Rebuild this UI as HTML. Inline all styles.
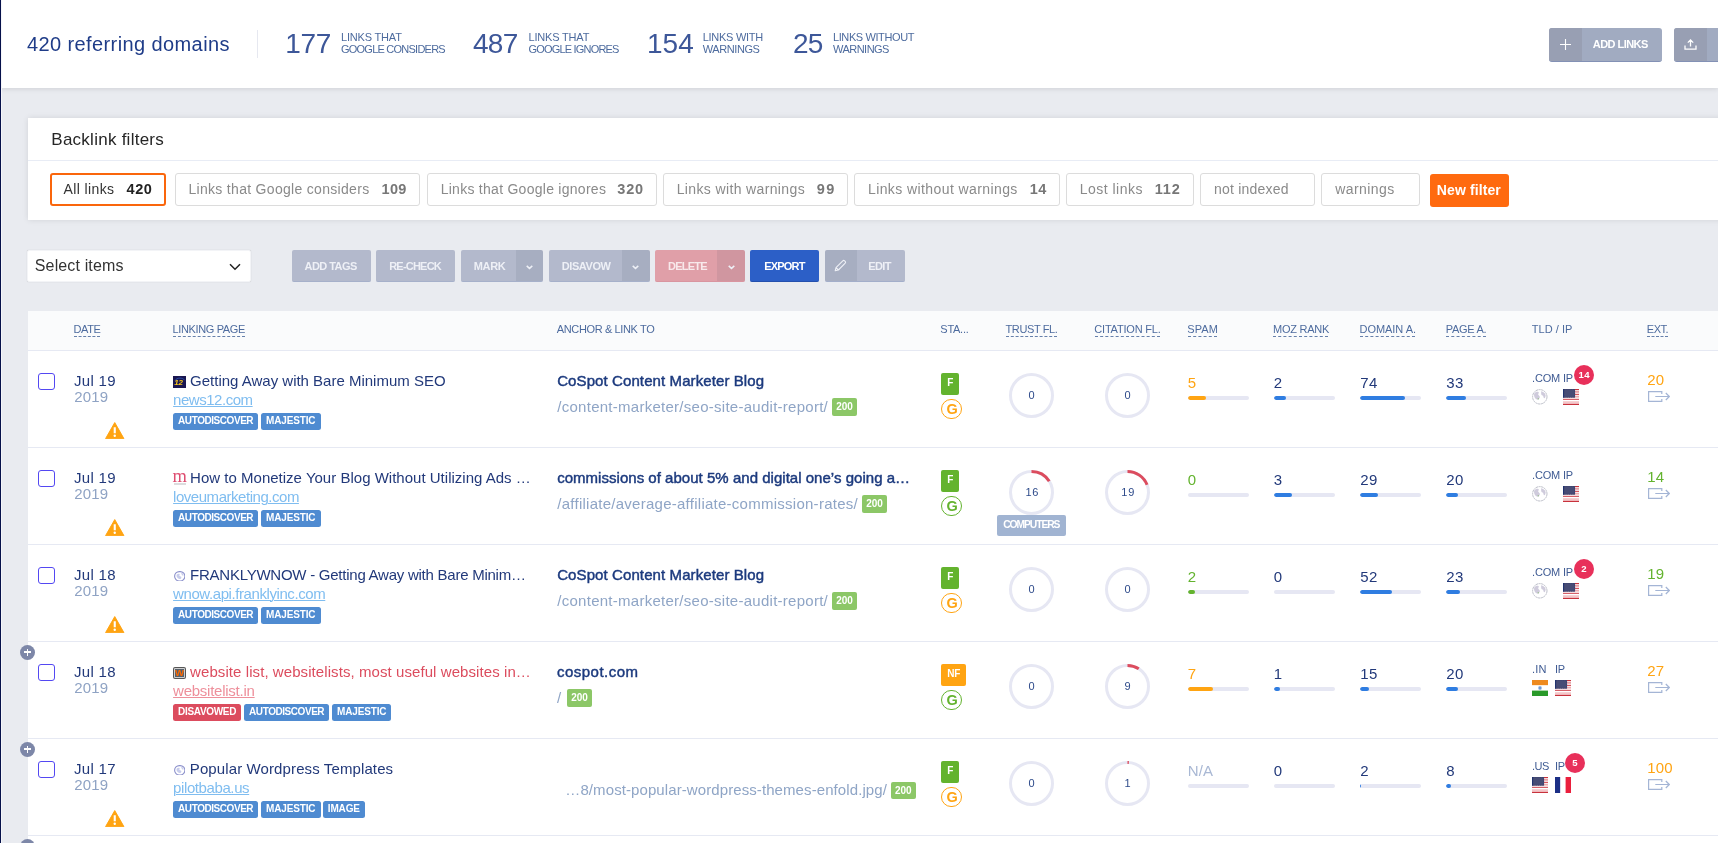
<!DOCTYPE html>
<html lang="en"><head><meta charset="utf-8"><title>Backlinks</title>
<style>
*{box-sizing:border-box;margin:0;padding:0}
html,body{width:1718px;height:843px;overflow:hidden}
body{background:#e9ebf0;font-family:"Liberation Sans",sans-serif;position:relative}
.t,.t2{position:absolute;white-space:nowrap;line-height:1;display:block}
.u{text-decoration:underline;text-decoration-thickness:1px;text-underline-offset:1px}
.abs{position:absolute}
header{position:absolute;left:0;top:0;width:1718px;height:88px;background:#fff;box-shadow:0 1px 5px rgba(0,0,0,.11)}
#app{position:absolute;left:0;top:0;width:1718px;height:843px;will-change:transform}
#strip{position:absolute;left:0;top:0;width:1px;height:843px;background:#06114a;box-shadow:1px 0 0 #f6f6fa;z-index:9}
.card{position:absolute;background:#fff}
.fbtn{position:absolute;top:55px;height:33px;border:1px solid #dcdcdc;border-radius:3px;background:#fff}
.btn{position:absolute;top:0;height:32.4px;border-radius:2px;background:#b3b9cc;border-bottom:1.5px solid #a3aeca;overflow:hidden}
.btn i{position:absolute;top:0;bottom:0;background:rgba(70,75,100,.1)}
.row{position:absolute;left:0;width:1690px;height:97px;background:#fff}
.row:before{content:"";position:absolute;left:0;right:0;top:0;height:1px;background:#e6e9f3}
.cb{position:absolute;left:10px;top:22.5px;width:17px;height:17px;border:1px solid #5348f2;border-radius:3px;background:#fff}
.tag{position:absolute;height:17px;border-radius:2.5px;background:#4f8bd1}
.bar{position:absolute;height:4px;width:61px;border-radius:2px;background:#e6e7f3;overflow:hidden}
.bar b{display:block;height:4px;border-radius:2px}
.plus{position:absolute;left:-8px;width:15px;height:15px;border-radius:50%;background:#7d87a8;z-index:5}
.plus:before,.plus:after{content:"";position:absolute;background:#fff}
.plus:before{left:4.1px;top:6.6px;width:6.800px;height:1.800px}
.plus:after{left:6.6px;top:4.1px;width:1.800px;height:6.800px}
</style></head><body>
<div id="strip"></div>
<main id="app">

<header>
<span class="t" style="left:27.00px;top:33.57px;font-size:20px;color:#1f3c88;letter-spacing:0.397px;">420 referring domains</span>
<div style="position:absolute;left:257.00px;top:29.50px;width:1.00px;height:28.50px;background:#e6e8f0"></div>
<span class="t" style="left:285.25px;top:30.05px;font-size:28px;color:#3d5799;letter-spacing:-0.384px;">177</span>
<span class="t" style="left:340.95px;top:31.94px;font-size:11px;color:#4d6b9e;letter-spacing:-0.174px;">LINKS THAT</span>
<span class="t" style="left:340.95px;top:43.69px;font-size:11px;color:#4d6b9e;letter-spacing:-0.759px;">GOOGLE CONSIDERS</span>
<span class="t" style="left:472.90px;top:30.05px;font-size:28px;color:#3d5799;letter-spacing:-0.609px;">487</span>
<span class="t" style="left:528.45px;top:31.94px;font-size:11px;color:#4d6b9e;letter-spacing:-0.174px;">LINKS THAT</span>
<span class="t" style="left:528.45px;top:43.69px;font-size:11px;color:#4d6b9e;letter-spacing:-0.805px;">GOOGLE IGNORES</span>
<span class="t" style="left:647.00px;top:30.05px;font-size:28px;color:#3d5799;letter-spacing:-0.009px;">154</span>
<span class="t" style="left:702.70px;top:31.94px;font-size:11px;color:#4d6b9e;letter-spacing:-0.273px;">LINKS WITH</span>
<span class="t" style="left:702.70px;top:43.69px;font-size:11px;color:#4d6b9e;letter-spacing:-0.406px;">WARNINGS</span>
<span class="t" style="left:792.90px;top:30.05px;font-size:28px;color:#3d5799;letter-spacing:-0.656px;">25</span>
<span class="t" style="left:832.95px;top:31.94px;font-size:11px;color:#4d6b9e;letter-spacing:-0.389px;">LINKS WITHOUT</span>
<span class="t" style="left:832.95px;top:43.69px;font-size:11px;color:#4d6b9e;letter-spacing:-0.513px;">WARNINGS</span>
<div style="position:absolute;left:1549.00px;top:28.00px;width:113.00px;height:33.50px;background:#a1abc1;border-radius:3px;border-bottom:1.5px solid #8391b5;overflow:hidden"><div style="position:absolute;left:0.00px;top:0.00px;width:33.00px;height:34.00px;background:#989fb3"></div><svg class="abs" style="left:11px;top:11px" width="11" height="11" viewBox="0 0 11 11"><path d="M5.5 0v11M0 5.5h11" stroke="#fff" stroke-width="1.1" fill="none"/></svg></div>
<span class="t" style="left:1592.80px;top:38.89px;font-size:11px;color:#fff;font-weight:700;letter-spacing:-0.549px;">ADD LINKS</span>
<div style="position:absolute;left:1674.00px;top:28.00px;width:60.00px;height:33.50px;background:#a1abc1;border-radius:3px;border-bottom:1.5px solid #8391b5;overflow:hidden"><div style="position:absolute;left:0.00px;top:0.00px;width:33.00px;height:34.00px;background:#989fb3"></div><svg class="abs" style="left:10px;top:10.5px" width="13" height="12" viewBox="0 0 13 12"><path d="M6.5 7.500V1M3.8 3.600L6.5 0.900L9.2 3.600M1 6.600V10.200H12V6.600" stroke="#fff" stroke-width="1.3" fill="none"/></svg></div>
</header>
<section class="card" style="left:28px;top:118px;width:1700px;height:101.5px;box-shadow:0 0 6px rgba(0,0,0,.1)">
<div style="position:absolute;left:0.00px;top:42.00px;width:1700.00px;height:1.00px;background:#e8ecf5"></div>
<span class="t" style="left:23.30px;top:12.61px;font-size:17px;color:#262626;letter-spacing:0.257px;">Backlink filters</span>
<div class="fbtn" style="left:22px;width:115.9px;border:2px solid #fa660c;"></div>
<span class="t" style="left:35.45px;top:63.85px;font-size:14px;color:#333;letter-spacing:0.404px;">All links</span>
<span class="t" style="left:98.45px;top:63.63px;font-size:14.5px;color:#222;font-weight:700;letter-spacing:0.648px;">420</span>
<div class="fbtn" style="left:147px;width:245.4px;"></div>
<span class="t" style="left:160.45px;top:63.85px;font-size:14px;color:#8a8a8a;letter-spacing:0.305px;">Links that Google considers</span>
<span class="t" style="left:353.45px;top:63.63px;font-size:14.5px;color:#777;font-weight:700;letter-spacing:0.398px;">109</span>
<div class="fbtn" style="left:399px;width:229.9px;"></div>
<span class="t" style="left:412.70px;top:63.85px;font-size:14px;color:#8a8a8a;letter-spacing:0.268px;">Links that Google ignores</span>
<span class="t" style="left:589.20px;top:63.63px;font-size:14.5px;color:#777;font-weight:700;letter-spacing:0.898px;">320</span>
<div class="fbtn" style="left:635px;width:184.9px;"></div>
<span class="t" style="left:648.70px;top:63.85px;font-size:14px;color:#8a8a8a;letter-spacing:0.364px;">Links with warnings</span>
<span class="t" style="left:788.70px;top:63.63px;font-size:14.5px;color:#777;font-weight:700;letter-spacing:1.609px;">99</span>
<div class="fbtn" style="left:826.25px;width:205.65px;"></div>
<span class="t" style="left:839.95px;top:63.85px;font-size:14px;color:#8a8a8a;letter-spacing:0.409px;">Links without warnings</span>
<span class="t" style="left:1001.70px;top:63.63px;font-size:14.5px;color:#777;font-weight:700;letter-spacing:0.609px;">14</span>
<div class="fbtn" style="left:1037.75px;width:127.9px;"></div>
<span class="t" style="left:1051.70px;top:63.85px;font-size:14px;color:#8a8a8a;letter-spacing:0.482px;">Lost links</span>
<span class="t" style="left:1126.70px;top:63.63px;font-size:14.5px;color:#777;font-weight:700;letter-spacing:0.922px;">112</span>
<div class="fbtn" style="left:1172px;width:114.9px;"></div>
<span class="t" style="left:1185.95px;top:63.85px;font-size:14px;color:#8a8a8a;letter-spacing:0.229px;">not indexed</span>
<div class="fbtn" style="left:1293px;width:98.9px;"></div>
<span class="t" style="left:1307.20px;top:63.85px;font-size:14px;color:#8a8a8a;letter-spacing:0.417px;">warnings</span>
<div style="position:absolute;left:1401.50px;top:56.00px;width:79.50px;height:33.00px;background:#ff6a0f;border-radius:3px"></div>
<span class="t" style="left:1408.80px;top:65.35px;font-size:14px;color:#fff;font-weight:700;letter-spacing:0.109px;">New filter</span>
</section>
<div class="toolbar" style="position:absolute;left:28px;top:250px;width:1690px;height:33px">
<div style="position:absolute;left:-0.60px;top:0.30px;width:223.30px;height:31.30px;background:#fff;border:1px solid #f3f4f7;border-radius:2px;box-shadow:0 0 1px rgba(0,0,0,.22)"><svg class="abs" style="left:200.2px;top:11.3px" width="12" height="8" viewBox="0 0 12 8"><path d="M1 1.2L6 6.2L11 1.2" stroke="#222" stroke-width="1.5" fill="none"/></svg></div>
<span class="t" style="left:6.80px;top:7.66px;font-size:16px;color:#333;letter-spacing:0.133px;">Select items</span>
<div class="btn" style="left:263.5px;width:79.1px;background:#b3b9cc;border-bottom-color:#a6b0ca"></div>
<span class="t" style="left:276.50px;top:10.69px;font-size:11px;color:#eef0f6;font-weight:700;letter-spacing:-0.534px;">ADD TAGS</span>
<div class="btn" style="left:347.7px;width:79.7px;background:#b3b9cc;border-bottom-color:#a6b0ca"></div>
<span class="t" style="left:361.20px;top:10.69px;font-size:11px;color:#eef0f6;font-weight:700;letter-spacing:-0.780px;">RE-CHECK</span>
<div class="btn" style="left:432.6px;width:82.9px;background:#b3b9cc;border-bottom-color:#a6b0ca"><i style="left:55.3px;right:0"></i><svg class="abs" style="left:65.9px;top:15.4px" width="7" height="4.500" viewBox="0 0 7 4.500"><path d="M.7 .9L3.500 3.400L6.300 .9" stroke="#eef0f6" stroke-width="1.5" fill="none"/></svg></div>
<span class="t" style="left:445.80px;top:10.69px;font-size:11px;color:#eef0f6;font-weight:700;letter-spacing:-0.367px;">MARK</span>
<div class="btn" style="left:520.7px;width:100.9px;background:#b3b9cc;border-bottom-color:#a6b0ca"><i style="left:73.0px;right:0"></i><svg class="abs" style="left:83.3px;top:15.4px" width="7" height="4.500" viewBox="0 0 7 4.500"><path d="M.7 .9L3.500 3.400L6.300 .9" stroke="#eef0f6" stroke-width="1.5" fill="none"/></svg></div>
<span class="t" style="left:533.80px;top:10.69px;font-size:11px;color:#eef0f6;font-weight:700;letter-spacing:-0.425px;">DISAVOW</span>
<div class="btn" style="left:626.5px;width:90.5px;background:#e09fa8;border-bottom-color:#d995a0"><i style="left:62.8px;right:0"></i><svg class="abs" style="left:73.7px;top:15.4px" width="7" height="4.500" viewBox="0 0 7 4.500"><path d="M.7 .9L3.500 3.400L6.300 .9" stroke="#eef0f6" stroke-width="1.5" fill="none"/></svg></div>
<span class="t" style="left:640.00px;top:10.69px;font-size:11px;color:#f8e9eb;font-weight:700;letter-spacing:-0.741px;">DELETE</span>
<div class="btn" style="left:722.4px;width:68.7px;background:#2c5fc7;border-bottom-color:#2450ae"></div>
<span class="t" style="left:736.20px;top:10.69px;font-size:11px;color:#fff;font-weight:700;letter-spacing:-0.787px;">EXPORT</span>
<div class="btn" style="left:796.6px;width:80.5px"><i style="left:0;width:32.3px"></i><svg class="abs" style="left:9.7px;top:8.7px" width="13" height="13" viewBox="0 0 13 13"><path d="M1.2 11.8L2 8.6L8.8 1.8a1.3 1.3 0 0 1 1.8 0l.6 .6a1.3 1.3 0 0 1 0 1.8L4.4 11zM2 8.6L4.4 11" stroke="#eef0f6" stroke-width="1.1" fill="none" stroke-linejoin="round"/></svg></div>
<span class="t" style="left:840.20px;top:10.69px;font-size:11px;color:#eef0f6;font-weight:700;letter-spacing:-0.587px;">EDIT</span>
</div>
<div class="table" style="position:absolute;left:28px;top:311px;width:1690px;height:540px">
<div class="thead" style="position:absolute;left:0;top:0;width:1700px;height:39px;background:#fafbfc">
<span class="t" style="left:45.55px;top:12.94px;font-size:11px;color:#4d6b9e;letter-spacing:-0.427px;">DATE</span>
<div style="position:absolute;left:45.75px;top:24.60px;width:26.25px;height:1.00px;border-top:1px dashed #4d6b9e;opacity:.85"></div>
<span class="t" style="left:144.55px;top:12.94px;font-size:11px;color:#4d6b9e;letter-spacing:-0.371px;">LINKING PAGE</span>
<div style="position:absolute;left:144.75px;top:24.60px;width:71.75px;height:1.00px;border-top:1px dashed #4d6b9e;opacity:.85"></div>
<span class="t" style="left:528.80px;top:12.94px;font-size:11px;color:#4d6b9e;letter-spacing:-0.368px;">ANCHOR &amp; LINK TO</span>
<span class="t" style="left:912.30px;top:12.94px;font-size:11px;color:#4d6b9e;letter-spacing:-0.250px;">STA...</span>
<span class="t" style="left:977.55px;top:12.94px;font-size:11px;color:#4d6b9e;letter-spacing:-0.396px;">TRUST FL.</span>
<div style="position:absolute;left:977.75px;top:24.60px;width:51.25px;height:1.00px;border-top:1px dashed #4d6b9e;opacity:.85"></div>
<span class="t" style="left:1066.30px;top:12.94px;font-size:11px;color:#4d6b9e;letter-spacing:-0.196px;">CITATION FL.</span>
<div style="position:absolute;left:1066.50px;top:24.60px;width:65.50px;height:1.00px;border-top:1px dashed #4d6b9e;opacity:.85"></div>
<span class="t" style="left:1159.30px;top:12.94px;font-size:11px;color:#4d6b9e;letter-spacing:0.047px;">SPAM</span>
<div style="position:absolute;left:1159.50px;top:24.60px;width:29.50px;height:1.00px;border-top:1px dashed #4d6b9e;opacity:.85"></div>
<span class="t" style="left:1245.10px;top:12.94px;font-size:11px;color:#4d6b9e;letter-spacing:-0.266px;">MOZ RANK</span>
<div style="position:absolute;left:1245.30px;top:24.60px;width:55.20px;height:1.00px;border-top:1px dashed #4d6b9e;opacity:.85"></div>
<span class="t" style="left:1331.60px;top:12.94px;font-size:11px;color:#4d6b9e;letter-spacing:-0.055px;">DOMAIN A.</span>
<div style="position:absolute;left:1331.80px;top:24.60px;width:55.40px;height:1.00px;border-top:1px dashed #4d6b9e;opacity:.85"></div>
<span class="t" style="left:1417.80px;top:12.94px;font-size:11px;color:#4d6b9e;letter-spacing:-0.316px;">PAGE A.</span>
<div style="position:absolute;left:1418.00px;top:24.60px;width:39.70px;height:1.00px;border-top:1px dashed #4d6b9e;opacity:.85"></div>
<span class="t" style="left:1503.80px;top:12.94px;font-size:11px;color:#4d6b9e;letter-spacing:0.022px;">TLD / IP</span>
<span class="t" style="left:1618.80px;top:12.94px;font-size:11px;color:#4d6b9e;letter-spacing:-0.478px;">EXT.</span>
<div style="position:absolute;left:1619.00px;top:24.60px;width:20.80px;height:1.00px;border-top:1px dashed #4d6b9e;opacity:.85"></div>
</div>
<div class="row" style="top:39px"><div class="cb"></div>
<span class="t" style="left:46.00px;top:23.30px;font-size:15px;color:#22397a;letter-spacing:0.294px;">Jul 19</span>
<span class="t" style="left:46.20px;top:39.30px;font-size:15px;color:#8fa3c4;letter-spacing:0.208px;">2019</span>
<svg class="abs" style="left:77.30px;top:71.90px" width="19.500" height="17.200" viewBox="0 0 20 18"><path d="M10 0.6L19.6 17.4H0.4Z" fill="#ffa412" stroke="#ffa412" stroke-width="1" stroke-linejoin="round"/><path d="M10 5.5v6.3" stroke="#fff" stroke-width="2.2"/><circle cx="10" cy="14.4" r="1.25" fill="#fff"/></svg>
<div style="position:absolute;left:145.00px;top:26.00px;width:13.00px;height:11.80px;background:#191650;overflow:hidden"><svg class="abs" style="left:0;top:0" width="13" height="12" viewBox="0 0 13 12"><path d="M2 4.500C4 1.500 9.500 1.200 11.800 4.300" stroke="#2c4fa8" stroke-width="1" fill="none"/></svg><span class="t2" style="left:1.3px;top:2.6px;font-size:8px;font-weight:700;font-style:italic;color:#f4c31c;letter-spacing:-.3px">12</span></div>
<span class="t" style="left:162.10px;top:23.40px;font-size:15px;color:#22397a;letter-spacing:-0.005px;">Getting Away with Bare Minimum SEO</span>
<a class="t u" style="left:145.10px;top:42.00px;font-size:15px;color:#7fbdf0;letter-spacing:-0.469px;">news12.com</a>
<div class="tag" style="left:145px;top:63px;width:84.8px"></div>
<span class="t" style="left:150.10px;top:65.73px;font-size:10px;color:#fff;font-weight:700;letter-spacing:-0.445px;">AUTODISCOVER</span>
<div class="tag" style="left:233px;top:63px;width:59.9px"></div>
<span class="t" style="left:238.10px;top:65.73px;font-size:10px;color:#fff;font-weight:700;letter-spacing:-0.166px;">MAJESTIC</span>
<span class="t" style="left:529.20px;top:23.40px;font-size:15px;color:#1c3a7e;letter-spacing:0.097px;-webkit-text-stroke:.45px #1c3a7e;">CoSpot Content Marketer Blog</span>
<span class="t" style="left:529.30px;top:48.50px;font-size:15px;color:#8fa5c6;letter-spacing:0.266px;">/content-marketer/seo-site-audit-report/</span>
<div style="position:absolute;left:804.00px;top:48.20px;width:25.00px;height:17.50px;background:#8cc767;border-radius:2px"></div>
<span class="t" style="left:808.30px;top:52.03px;font-size:10px;color:#fff;font-weight:700;letter-spacing:-0.044px;">200</span>
<div style="position:absolute;left:913.00px;top:23.00px;width:18.00px;height:21.90px;background:#63b32e;border-radius:2px"></div>
<span class="t" style="left:919.30px;top:28.43px;font-size:10px;color:#fff;font-weight:700;">F</span>
<div style="position:absolute;left:913.00px;top:48.60px;width:20.50px;height:20.50px;border:1px solid #ffa412;border-radius:50%;background:#fff"></div>
<span class="t" style="left:918.40px;top:51.63px;font-size:14.5px;color:#ffa412;font-weight:700;">G</span>
<svg class="abs" style="left:980.90px;top:22.80px" width="45" height="45" viewBox="0 0 45 45"><circle cx="22.500" cy="22.500" r="21" fill="none" stroke="#e6e7f3" stroke-width="3"/></svg>
<span class="t" style="left:1000.50px;top:39.59px;font-size:11px;color:#2d4a8a;">0</span>
<svg class="abs" style="left:1076.80px;top:22.80px" width="45" height="45" viewBox="0 0 45 45"><circle cx="22.500" cy="22.500" r="21" fill="none" stroke="#e6e7f3" stroke-width="3"/></svg>
<span class="t" style="left:1096.40px;top:39.59px;font-size:11px;color:#2d4a8a;">0</span>
<span class="t" style="left:1159.80px;top:25.30px;font-size:15px;color:#ffa412;">5</span><div class="bar" style="left:1159.5px;top:45.8px"><b style="width:18px;background:#ffa412"></b></div>
<span class="t" style="left:1245.80px;top:25.30px;font-size:15px;color:#22397a;">2</span><div class="bar" style="left:1245.5px;top:45.8px"><b style="width:12px;background:#2f7de1"></b></div>
<span class="t" style="left:1332.30px;top:25.30px;font-size:15px;color:#22397a;letter-spacing:0.312px;">74</span><div class="bar" style="left:1332px;top:45.8px"><b style="width:45px;background:#2f7de1"></b></div>
<span class="t" style="left:1418.30px;top:25.30px;font-size:15px;color:#22397a;letter-spacing:0.312px;">33</span><div class="bar" style="left:1418px;top:45.8px"><b style="width:20px;background:#2f7de1"></b></div>
<span class="t" style="left:1504.00px;top:22.79px;font-size:11px;color:#3f5b93;letter-spacing:-0.178px;">.COM</span>
<span class="t" style="left:1535.10px;top:22.79px;font-size:11px;color:#3f5b93;letter-spacing:-0.406px;">IP</span>
<svg class="abs" style="left:1504.10px;top:39.20px" width="15.600" height="15.600" viewBox="0 0 15.600 15.600"><circle cx="7.800" cy="7.800" r="7.200" fill="#fff" stroke="#b4b7c2" stroke-width=".9" stroke-dasharray="2.200 .5"/><path d="M2.200 4.800c1.200-1.900 3.100-2.300 4.300-1.700.9.700-.4 1.500-.3 2.500.2.900 1.300 1.100 1.600 2.100.3 1.100-.6 2.200-1.600 3C4.300 11 1.300 8.300 2.200 4.800Z" fill="#cfcbdc"/><path d="M9 2.200c2.200.2 4 1.700 4.600 3.800.1 1.300-.3 2.600-1.100 3.300-.9-.3-1.200-1.400-1.300-2.500-.9-.4-1.900-.7-2-1.800-.1-1 .1-1.900-.2-2.800Z" fill="#cfcbdc"/><circle cx="6.300" cy="9.700" r=".7" fill="#9cc08e"/></svg>
<svg class="abs" style="left:1535.00px;top:39.00px" width="16" height="16" viewBox="0 0 16 16"><rect x="0" y="0" width="16" height="1.15" fill="#c8323c"/><rect x="0" y="1.1" width="16" height="1.45" fill="#f6d6d8"/><rect x="0" y="2.5" width="16" height="1.15" fill="#d5555e"/><rect x="0" y="3.6" width="16" height="1.35" fill="#fbe9ea"/><rect x="0" y="4.9" width="16" height="1.15" fill="#d5555e"/><rect x="0" y="6" width="16" height="1.35" fill="#fbe9ea"/><rect x="0" y="7.3" width="16" height="1.35" fill="#e58a90"/><rect x="0" y="8.6" width="16" height="1.25" fill="#fff"/><rect x="0" y="9.8" width="16" height="1.15" fill="#cf4650"/><rect x="0" y="10.9" width="16" height="1.35" fill="#fff"/><rect x="0" y="12.2" width="16" height="2.75" fill="#f4c6c9"/><rect x="0" y="14.9" width="16" height="1.15" fill="#c8323c"/><rect x="0" y="0" width="12" height="8.600" fill="#474c75"/><rect x="0" y="0" width="1" height="8.600" fill="#1f3372"/><rect x="1" y=".3" width="10.700" height="8" fill="none" stroke="#2f3766" stroke-width=".6" stroke-dasharray=".9 .9"/></svg>
<div style="position:absolute;left:1546.00px;top:14.80px;width:20.00px;height:20.00px;background:#e8305a;border-radius:50%"></div>
<span class="t" style="left:1550.60px;top:19.97px;font-size:9.6px;color:#fff;font-weight:700;letter-spacing:0.328px;">14</span>
<span class="t" style="left:1619.20px;top:21.50px;font-size:15px;color:#ffa412;letter-spacing:0.312px;">20</span>
<svg class="abs" style="left:1619.50px;top:41.00px" width="22" height="11" viewBox="0 0 22 11"><path d="M13.800 3V.6H.6V10.400H13.800V8" stroke="#a4b5d5" stroke-width="1.2" fill="none"/><path d="M7.300 5.500H21.200M17.800 2L21.300 5.500L17.800 9" stroke="#a4b5d5" stroke-width="1.2" fill="none"/></svg>
</div>
<div class="row" style="top:136px"><div class="cb"></div>
<span class="t" style="left:46.00px;top:23.30px;font-size:15px;color:#22397a;letter-spacing:0.294px;">Jul 19</span>
<span class="t" style="left:46.20px;top:39.30px;font-size:15px;color:#8fa3c4;letter-spacing:0.208px;">2019</span>
<svg class="abs" style="left:77.30px;top:71.90px" width="19.500" height="17.200" viewBox="0 0 20 18"><path d="M10 0.6L19.6 17.4H0.4Z" fill="#ffa412" stroke="#ffa412" stroke-width="1" stroke-linejoin="round"/><path d="M10 5.5v6.3" stroke="#fff" stroke-width="2.2"/><circle cx="10" cy="14.4" r="1.25" fill="#fff"/></svg>
<div style="position:absolute;left:144.80px;top:26.50px;width:14.00px;height:15.00px;"><span class="t2" style="left:-0.3px;top:-6.3px;font-size:18.5px;color:#de4d70;font-family:'Liberation Serif',serif">m</span><div style="position:absolute;left:1.40px;top:9.80px;width:11.40px;height:1.50px;background:#b9b9bd;opacity:.5"></div></div>
<span class="t" style="left:162.10px;top:23.40px;font-size:15px;color:#22397a;letter-spacing:0.011px;">How to Monetize Your Blog Without Utilizing Ads …</span>
<a class="t u" style="left:145.10px;top:42.00px;font-size:15px;color:#7fbdf0;letter-spacing:-0.467px;">loveumarketing.com</a>
<div class="tag" style="left:145px;top:63px;width:84.8px"></div>
<span class="t" style="left:150.10px;top:65.74px;font-size:10px;color:#fff;font-weight:700;letter-spacing:-0.445px;">AUTODISCOVER</span>
<div class="tag" style="left:233px;top:63px;width:59.9px"></div>
<span class="t" style="left:238.10px;top:65.74px;font-size:10px;color:#fff;font-weight:700;letter-spacing:-0.166px;">MAJESTIC</span>
<span class="t" style="left:529.20px;top:23.40px;font-size:15px;color:#1c3a7e;letter-spacing:0.026px;-webkit-text-stroke:.45px #1c3a7e;">commissions of about 5% and digital one’s going a…</span>
<span class="t" style="left:529.30px;top:48.50px;font-size:15px;color:#8fa5c6;letter-spacing:0.259px;">/affiliate/average-affiliate-commission-rates/</span>
<div style="position:absolute;left:833.90px;top:48.20px;width:25.00px;height:17.50px;background:#8cc767;border-radius:2px"></div>
<span class="t" style="left:838.20px;top:52.03px;font-size:10px;color:#fff;font-weight:700;letter-spacing:-0.044px;">200</span>
<div style="position:absolute;left:913.00px;top:23.00px;width:18.00px;height:21.90px;background:#63b32e;border-radius:2px"></div>
<span class="t" style="left:919.30px;top:28.43px;font-size:10px;color:#fff;font-weight:700;">F</span>
<div style="position:absolute;left:913.00px;top:48.60px;width:20.50px;height:20.50px;border:1px solid #63b32e;border-radius:50%;background:#fff"></div>
<span class="t" style="left:918.40px;top:51.63px;font-size:14.5px;color:#63b32e;font-weight:700;">G</span>
<svg class="abs" style="left:980.90px;top:22.80px" width="45" height="45" viewBox="0 0 45 45"><circle cx="22.500" cy="22.500" r="21" fill="none" stroke="#e6e7f3" stroke-width="3"/><path d="M22.500 1.500A21 21 0 0 1 40.23 11.25" fill="none" stroke="#dc4c5e" stroke-width="3"/></svg>
<span class="t" style="left:997.40px;top:39.59px;font-size:11px;color:#2d4a8a;letter-spacing:0.750px;">16</span>
<svg class="abs" style="left:1076.80px;top:22.80px" width="45" height="45" viewBox="0 0 45 45"><circle cx="22.500" cy="22.500" r="21" fill="none" stroke="#e6e7f3" stroke-width="3"/><path d="M22.500 1.500A21 21 0 0 1 42.03 14.77" fill="none" stroke="#dc4c5e" stroke-width="3"/></svg>
<span class="t" style="left:1093.30px;top:39.59px;font-size:11px;color:#2d4a8a;letter-spacing:0.750px;">19</span>
<div style="position:absolute;left:969.20px;top:68.00px;width:69.20px;height:20.80px;background:#a1b4d2;border-radius:2px"></div>
<span class="t" style="left:975.20px;top:73.28px;font-size:10.3px;color:#fff;font-weight:700;letter-spacing:-1.062px;">COMPUTERS</span>
<span class="t" style="left:1159.80px;top:25.30px;font-size:15px;color:#63b32e;">0</span><div class="bar" style="left:1159.5px;top:45.8px"><b style="width:0px;background:#63b32e"></b></div>
<span class="t" style="left:1245.80px;top:25.30px;font-size:15px;color:#22397a;">3</span><div class="bar" style="left:1245.5px;top:45.8px"><b style="width:18px;background:#2f7de1"></b></div>
<span class="t" style="left:1332.30px;top:25.30px;font-size:15px;color:#22397a;letter-spacing:0.312px;">29</span><div class="bar" style="left:1332px;top:45.8px"><b style="width:17.7px;background:#2f7de1"></b></div>
<span class="t" style="left:1418.30px;top:25.30px;font-size:15px;color:#22397a;letter-spacing:0.312px;">20</span><div class="bar" style="left:1418px;top:45.8px"><b style="width:12px;background:#2f7de1"></b></div>
<span class="t" style="left:1504.00px;top:22.79px;font-size:11px;color:#3f5b93;letter-spacing:-0.178px;">.COM</span>
<span class="t" style="left:1535.10px;top:22.79px;font-size:11px;color:#3f5b93;letter-spacing:-0.406px;">IP</span>
<svg class="abs" style="left:1504.10px;top:39.20px" width="15.600" height="15.600" viewBox="0 0 15.600 15.600"><circle cx="7.800" cy="7.800" r="7.200" fill="#fff" stroke="#b4b7c2" stroke-width=".9" stroke-dasharray="2.200 .5"/><path d="M2.200 4.800c1.200-1.900 3.100-2.300 4.300-1.700.9.700-.4 1.500-.3 2.500.2.900 1.300 1.100 1.600 2.100.3 1.100-.6 2.200-1.600 3C4.300 11 1.300 8.300 2.200 4.800Z" fill="#cfcbdc"/><path d="M9 2.200c2.200.2 4 1.700 4.600 3.800.1 1.300-.3 2.600-1.100 3.300-.9-.3-1.200-1.400-1.300-2.500-.9-.4-1.900-.7-2-1.800-.1-1 .1-1.900-.2-2.800Z" fill="#cfcbdc"/><circle cx="6.300" cy="9.700" r=".7" fill="#9cc08e"/></svg>
<svg class="abs" style="left:1535.00px;top:39.00px" width="16" height="16" viewBox="0 0 16 16"><rect x="0" y="0" width="16" height="1.15" fill="#c8323c"/><rect x="0" y="1.1" width="16" height="1.45" fill="#f6d6d8"/><rect x="0" y="2.5" width="16" height="1.15" fill="#d5555e"/><rect x="0" y="3.6" width="16" height="1.35" fill="#fbe9ea"/><rect x="0" y="4.9" width="16" height="1.15" fill="#d5555e"/><rect x="0" y="6" width="16" height="1.35" fill="#fbe9ea"/><rect x="0" y="7.3" width="16" height="1.35" fill="#e58a90"/><rect x="0" y="8.6" width="16" height="1.25" fill="#fff"/><rect x="0" y="9.8" width="16" height="1.15" fill="#cf4650"/><rect x="0" y="10.9" width="16" height="1.35" fill="#fff"/><rect x="0" y="12.2" width="16" height="2.75" fill="#f4c6c9"/><rect x="0" y="14.9" width="16" height="1.15" fill="#c8323c"/><rect x="0" y="0" width="12" height="8.600" fill="#474c75"/><rect x="0" y="0" width="1" height="8.600" fill="#1f3372"/><rect x="1" y=".3" width="10.700" height="8" fill="none" stroke="#2f3766" stroke-width=".6" stroke-dasharray=".9 .9"/></svg>
<span class="t" style="left:1619.20px;top:21.50px;font-size:15px;color:#63b32e;letter-spacing:0.312px;">14</span>
<svg class="abs" style="left:1619.50px;top:41.00px" width="22" height="11" viewBox="0 0 22 11"><path d="M13.800 3V.6H.6V10.400H13.800V8" stroke="#a4b5d5" stroke-width="1.2" fill="none"/><path d="M7.300 5.500H21.200M17.800 2L21.300 5.500L17.800 9" stroke="#a4b5d5" stroke-width="1.2" fill="none"/></svg>
</div>
<div class="row" style="top:233px"><div class="cb"></div>
<span class="t" style="left:46.00px;top:23.30px;font-size:15px;color:#22397a;letter-spacing:0.294px;">Jul 18</span>
<span class="t" style="left:46.20px;top:39.30px;font-size:15px;color:#8fa3c4;letter-spacing:0.208px;">2019</span>
<svg class="abs" style="left:77.30px;top:71.90px" width="19.500" height="17.200" viewBox="0 0 20 18"><path d="M10 0.6L19.6 17.4H0.4Z" fill="#ffa412" stroke="#ffa412" stroke-width="1" stroke-linejoin="round"/><path d="M10 5.5v6.3" stroke="#fff" stroke-width="2.2"/><circle cx="10" cy="14.4" r="1.25" fill="#fff"/></svg>
<svg class="abs" style="left:145.80px;top:26.60px" width="11.500" height="10.600" viewBox="0 0 11.500 10.600"><rect x=".6" y=".6" width="10.300" height="9.400" rx="4.700" fill="#fff" stroke="#8c91cc" stroke-width="1.1"/><path d="M2.600 3.800c.9-1.300 2.300-1.400 3-.8.500.6-.5 1-.2 1.700.3.600 1.100.5 1.700 1.100.6.700.1 1.800-.6 2.200C4.700 8.300 2 6.600 2.600 3.800Z" fill="#b9bfe6" opacity=".8"/><path d="M7.200 1.800c1.300.2 2.300 1.200 2.500 2.500-.7.600-1.600.2-1.900-.6-.2-.6-.7-1.100-.6-1.900Z" fill="#b9bfe6" opacity=".8"/></svg>
<span class="t" style="left:162.10px;top:23.40px;font-size:15px;color:#22397a;letter-spacing:-0.247px;">FRANKLYWNOW - Getting Away with Bare Minim…</span>
<a class="t u" style="left:145.10px;top:42.00px;font-size:15px;color:#7fbdf0;letter-spacing:-0.415px;">wnow.api.franklyinc.com</a>
<div class="tag" style="left:145px;top:63px;width:84.8px"></div>
<span class="t" style="left:150.10px;top:65.74px;font-size:10px;color:#fff;font-weight:700;letter-spacing:-0.445px;">AUTODISCOVER</span>
<div class="tag" style="left:233px;top:63px;width:59.9px"></div>
<span class="t" style="left:238.10px;top:65.74px;font-size:10px;color:#fff;font-weight:700;letter-spacing:-0.166px;">MAJESTIC</span>
<span class="t" style="left:529.20px;top:23.40px;font-size:15px;color:#1c3a7e;letter-spacing:0.097px;-webkit-text-stroke:.45px #1c3a7e;">CoSpot Content Marketer Blog</span>
<span class="t" style="left:529.30px;top:48.50px;font-size:15px;color:#8fa5c6;letter-spacing:0.266px;">/content-marketer/seo-site-audit-report/</span>
<div style="position:absolute;left:804.00px;top:48.20px;width:25.00px;height:17.50px;background:#8cc767;border-radius:2px"></div>
<span class="t" style="left:808.30px;top:52.03px;font-size:10px;color:#fff;font-weight:700;letter-spacing:-0.044px;">200</span>
<div style="position:absolute;left:913.00px;top:23.00px;width:18.00px;height:21.90px;background:#63b32e;border-radius:2px"></div>
<span class="t" style="left:919.30px;top:28.43px;font-size:10px;color:#fff;font-weight:700;">F</span>
<div style="position:absolute;left:913.00px;top:48.60px;width:20.50px;height:20.50px;border:1px solid #ffa412;border-radius:50%;background:#fff"></div>
<span class="t" style="left:918.40px;top:51.63px;font-size:14.5px;color:#ffa412;font-weight:700;">G</span>
<svg class="abs" style="left:980.90px;top:22.80px" width="45" height="45" viewBox="0 0 45 45"><circle cx="22.500" cy="22.500" r="21" fill="none" stroke="#e6e7f3" stroke-width="3"/></svg>
<span class="t" style="left:1000.50px;top:39.59px;font-size:11px;color:#2d4a8a;">0</span>
<svg class="abs" style="left:1076.80px;top:22.80px" width="45" height="45" viewBox="0 0 45 45"><circle cx="22.500" cy="22.500" r="21" fill="none" stroke="#e6e7f3" stroke-width="3"/></svg>
<span class="t" style="left:1096.40px;top:39.59px;font-size:11px;color:#2d4a8a;">0</span>
<span class="t" style="left:1159.80px;top:25.30px;font-size:15px;color:#63b32e;">2</span><div class="bar" style="left:1159.5px;top:45.8px"><b style="width:7px;background:#63b32e"></b></div>
<span class="t" style="left:1245.80px;top:25.30px;font-size:15px;color:#22397a;">0</span><div class="bar" style="left:1245.5px;top:45.8px"><b style="width:0px;background:#2f7de1"></b></div>
<span class="t" style="left:1332.30px;top:25.30px;font-size:15px;color:#22397a;letter-spacing:0.312px;">52</span><div class="bar" style="left:1332px;top:45.8px"><b style="width:31.7px;background:#2f7de1"></b></div>
<span class="t" style="left:1418.30px;top:25.30px;font-size:15px;color:#22397a;letter-spacing:0.312px;">23</span><div class="bar" style="left:1418px;top:45.8px"><b style="width:14px;background:#2f7de1"></b></div>
<span class="t" style="left:1504.00px;top:22.79px;font-size:11px;color:#3f5b93;letter-spacing:-0.178px;">.COM</span>
<span class="t" style="left:1535.10px;top:22.79px;font-size:11px;color:#3f5b93;letter-spacing:-0.406px;">IP</span>
<svg class="abs" style="left:1504.10px;top:39.20px" width="15.600" height="15.600" viewBox="0 0 15.600 15.600"><circle cx="7.800" cy="7.800" r="7.200" fill="#fff" stroke="#b4b7c2" stroke-width=".9" stroke-dasharray="2.200 .5"/><path d="M2.200 4.800c1.200-1.900 3.100-2.300 4.300-1.700.9.700-.4 1.500-.3 2.500.2.900 1.300 1.100 1.600 2.100.3 1.100-.6 2.200-1.600 3C4.300 11 1.300 8.300 2.200 4.800Z" fill="#cfcbdc"/><path d="M9 2.200c2.200.2 4 1.700 4.600 3.800.1 1.300-.3 2.600-1.100 3.300-.9-.3-1.200-1.400-1.300-2.500-.9-.4-1.900-.7-2-1.800-.1-1 .1-1.900-.2-2.800Z" fill="#cfcbdc"/><circle cx="6.300" cy="9.700" r=".7" fill="#9cc08e"/></svg>
<svg class="abs" style="left:1535.00px;top:39.00px" width="16" height="16" viewBox="0 0 16 16"><rect x="0" y="0" width="16" height="1.15" fill="#c8323c"/><rect x="0" y="1.1" width="16" height="1.45" fill="#f6d6d8"/><rect x="0" y="2.5" width="16" height="1.15" fill="#d5555e"/><rect x="0" y="3.6" width="16" height="1.35" fill="#fbe9ea"/><rect x="0" y="4.9" width="16" height="1.15" fill="#d5555e"/><rect x="0" y="6" width="16" height="1.35" fill="#fbe9ea"/><rect x="0" y="7.3" width="16" height="1.35" fill="#e58a90"/><rect x="0" y="8.6" width="16" height="1.25" fill="#fff"/><rect x="0" y="9.8" width="16" height="1.15" fill="#cf4650"/><rect x="0" y="10.9" width="16" height="1.35" fill="#fff"/><rect x="0" y="12.2" width="16" height="2.75" fill="#f4c6c9"/><rect x="0" y="14.9" width="16" height="1.15" fill="#c8323c"/><rect x="0" y="0" width="12" height="8.600" fill="#474c75"/><rect x="0" y="0" width="1" height="8.600" fill="#1f3372"/><rect x="1" y=".3" width="10.700" height="8" fill="none" stroke="#2f3766" stroke-width=".6" stroke-dasharray=".9 .9"/></svg>
<div style="position:absolute;left:1546.00px;top:14.80px;width:20.00px;height:20.00px;background:#e8305a;border-radius:50%"></div>
<span class="t" style="left:1553.25px;top:19.97px;font-size:9.6px;color:#fff;font-weight:700;">2</span>
<span class="t" style="left:1619.20px;top:21.50px;font-size:15px;color:#63b32e;letter-spacing:0.312px;">19</span>
<svg class="abs" style="left:1619.50px;top:41.00px" width="22" height="11" viewBox="0 0 22 11"><path d="M13.800 3V.6H.6V10.400H13.800V8" stroke="#a4b5d5" stroke-width="1.2" fill="none"/><path d="M7.300 5.500H21.200M17.800 2L21.300 5.500L17.800 9" stroke="#a4b5d5" stroke-width="1.2" fill="none"/></svg>
</div>
<div class="row" style="top:330px"><div class="cb"></div>
<div class="plus" style="top:3.9px"></div>
<span class="t" style="left:46.00px;top:23.30px;font-size:15px;color:#22397a;letter-spacing:0.294px;">Jul 18</span>
<span class="t" style="left:46.20px;top:39.30px;font-size:15px;color:#8fa3c4;letter-spacing:0.208px;">2019</span>
<div style="position:absolute;left:145.00px;top:25.90px;width:13.00px;height:12.00px;background:#555;border-radius:2px"><div style="position:absolute;left:1.00px;top:1.00px;width:11.00px;height:10.00px;background:#cfcfcf;border-radius:1px"><div style="position:absolute;left:1.00px;top:1.00px;width:9.00px;height:8.00px;background:#56606b"><span class="t2" style="left:-0.1px;top:-0.6px;font-size:9.5px;font-weight:700;color:#ff6a00;letter-spacing:-.5px">W</span></div></div></div>
<span class="t" style="left:162.10px;top:23.40px;font-size:15px;color:#dc4c5e;letter-spacing:0.077px;">website list, websitelists, most useful websites in…</span>
<a class="t u" style="left:145.10px;top:42.00px;font-size:15px;color:#ee8f9b;letter-spacing:-0.250px;">websitelist.in</a>
<div class="tag" style="left:145px;top:63px;width:67.8px;background:#dc4c5e"></div>
<span class="t" style="left:150.10px;top:65.74px;font-size:10px;color:#fff;font-weight:700;letter-spacing:-0.330px;">DISAVOWED</span>
<div class="tag" style="left:216px;top:63px;width:84.8px"></div>
<span class="t" style="left:221.10px;top:65.74px;font-size:10px;color:#fff;font-weight:700;letter-spacing:-0.445px;">AUTODISCOVER</span>
<div class="tag" style="left:304px;top:63px;width:58.7px"></div>
<span class="t" style="left:309.10px;top:65.74px;font-size:10px;color:#fff;font-weight:700;letter-spacing:-0.166px;">MAJESTIC</span>
<span class="t" style="left:529.00px;top:23.40px;font-size:15px;color:#1c3a7e;letter-spacing:0.477px;-webkit-text-stroke:.45px #1c3a7e;">cospot.com</span>
<span class="t" style="left:529.10px;top:48.50px;font-size:15px;color:#8fa5c6;">/</span>
<div style="position:absolute;left:539.00px;top:48.20px;width:25.00px;height:17.50px;background:#8cc767;border-radius:2px"></div>
<span class="t" style="left:543.30px;top:52.03px;font-size:10px;color:#fff;font-weight:700;letter-spacing:-0.044px;">200</span>
<div style="position:absolute;left:913.00px;top:23.00px;width:25.00px;height:21.90px;background:#ffa412;border-radius:2px"></div>
<span class="t" style="left:919.30px;top:28.43px;font-size:10px;color:#fff;font-weight:700;letter-spacing:-0.344px;">NF</span>
<div style="position:absolute;left:913.00px;top:48.60px;width:20.50px;height:20.50px;border:1px solid #63b32e;border-radius:50%;background:#fff"></div>
<span class="t" style="left:918.40px;top:51.63px;font-size:14.5px;color:#63b32e;font-weight:700;">G</span>
<svg class="abs" style="left:980.90px;top:22.80px" width="45" height="45" viewBox="0 0 45 45"><circle cx="22.500" cy="22.500" r="21" fill="none" stroke="#e6e7f3" stroke-width="3"/></svg>
<span class="t" style="left:1000.50px;top:39.59px;font-size:11px;color:#2d4a8a;">0</span>
<svg class="abs" style="left:1076.80px;top:22.80px" width="45" height="45" viewBox="0 0 45 45"><circle cx="22.500" cy="22.500" r="21" fill="none" stroke="#e6e7f3" stroke-width="3"/><path d="M22.500 1.500A21 21 0 0 1 33.75 4.77" fill="none" stroke="#dc4c5e" stroke-width="3"/></svg>
<span class="t" style="left:1096.40px;top:39.59px;font-size:11px;color:#2d4a8a;">9</span>
<span class="t" style="left:1159.80px;top:25.30px;font-size:15px;color:#ffa412;">7</span><div class="bar" style="left:1159.5px;top:45.8px"><b style="width:25px;background:#ffa412"></b></div>
<span class="t" style="left:1245.80px;top:25.30px;font-size:15px;color:#22397a;">1</span><div class="bar" style="left:1245.5px;top:45.8px"><b style="width:6px;background:#2f7de1"></b></div>
<span class="t" style="left:1332.30px;top:25.30px;font-size:15px;color:#22397a;letter-spacing:0.312px;">15</span><div class="bar" style="left:1332px;top:45.8px"><b style="width:9px;background:#2f7de1"></b></div>
<span class="t" style="left:1418.30px;top:25.30px;font-size:15px;color:#22397a;letter-spacing:0.312px;">20</span><div class="bar" style="left:1418px;top:45.8px"><b style="width:12px;background:#2f7de1"></b></div>
<span class="t" style="left:1504.00px;top:22.79px;font-size:11px;color:#3f5b93;letter-spacing:0.169px;">.IN</span>
<span class="t" style="left:1527.00px;top:22.79px;font-size:11px;color:#3f5b93;letter-spacing:-0.406px;">IP</span>
<svg class="abs" style="left:1504.00px;top:39.00px" width="16" height="16" viewBox="0 0 16 16"><rect width="16" height="5.400" fill="#ee8a1e"/><rect y="5.400" width="16" height="5.200" fill="#fff"/><rect y="10.600" width="16" height="5.400" fill="#2a9a2a"/><circle cx="8" cy="8" r="1.900" fill="#8fb3e0"/><circle cx="8" cy="8" r=".8" fill="#4a78c2"/></svg>
<svg class="abs" style="left:1527.00px;top:39.00px" width="16" height="16" viewBox="0 0 16 16"><rect x="0" y="0" width="16" height="1.15" fill="#c8323c"/><rect x="0" y="1.1" width="16" height="1.45" fill="#f6d6d8"/><rect x="0" y="2.5" width="16" height="1.15" fill="#d5555e"/><rect x="0" y="3.6" width="16" height="1.35" fill="#fbe9ea"/><rect x="0" y="4.9" width="16" height="1.15" fill="#d5555e"/><rect x="0" y="6" width="16" height="1.35" fill="#fbe9ea"/><rect x="0" y="7.3" width="16" height="1.35" fill="#e58a90"/><rect x="0" y="8.6" width="16" height="1.25" fill="#fff"/><rect x="0" y="9.8" width="16" height="1.15" fill="#cf4650"/><rect x="0" y="10.9" width="16" height="1.35" fill="#fff"/><rect x="0" y="12.2" width="16" height="2.75" fill="#f4c6c9"/><rect x="0" y="14.9" width="16" height="1.15" fill="#c8323c"/><rect x="0" y="0" width="12" height="8.600" fill="#474c75"/><rect x="0" y="0" width="1" height="8.600" fill="#1f3372"/><rect x="1" y=".3" width="10.700" height="8" fill="none" stroke="#2f3766" stroke-width=".6" stroke-dasharray=".9 .9"/></svg>
<span class="t" style="left:1619.20px;top:21.50px;font-size:15px;color:#ffa412;letter-spacing:0.312px;">27</span>
<svg class="abs" style="left:1619.50px;top:41.00px" width="22" height="11" viewBox="0 0 22 11"><path d="M13.800 3V.6H.6V10.400H13.800V8" stroke="#a4b5d5" stroke-width="1.2" fill="none"/><path d="M7.300 5.500H21.200M17.800 2L21.300 5.500L17.800 9" stroke="#a4b5d5" stroke-width="1.2" fill="none"/></svg>
</div>
<div class="row" style="top:427px"><div class="cb"></div>
<div class="plus" style="top:3.9px"></div>
<span class="t" style="left:46.00px;top:23.30px;font-size:15px;color:#22397a;letter-spacing:0.294px;">Jul 17</span>
<span class="t" style="left:46.20px;top:39.30px;font-size:15px;color:#8fa3c4;letter-spacing:0.208px;">2019</span>
<svg class="abs" style="left:77.30px;top:71.90px" width="19.500" height="17.200" viewBox="0 0 20 18"><path d="M10 0.6L19.6 17.4H0.4Z" fill="#ffa412" stroke="#ffa412" stroke-width="1" stroke-linejoin="round"/><path d="M10 5.5v6.3" stroke="#fff" stroke-width="2.2"/><circle cx="10" cy="14.4" r="1.25" fill="#fff"/></svg>
<svg class="abs" style="left:145.80px;top:26.60px" width="11.500" height="10.600" viewBox="0 0 11.500 10.600"><rect x=".6" y=".6" width="10.300" height="9.400" rx="4.700" fill="#fff" stroke="#8c91cc" stroke-width="1.1"/><path d="M2.600 3.800c.9-1.300 2.300-1.400 3-.8.500.6-.5 1-.2 1.700.3.600 1.100.5 1.700 1.100.6.700.1 1.800-.6 2.200C4.700 8.300 2 6.600 2.600 3.800Z" fill="#b9bfe6" opacity=".8"/><path d="M7.200 1.800c1.300.2 2.300 1.200 2.500 2.500-.7.600-1.600.2-1.900-.6-.2-.6-.7-1.100-.6-1.900Z" fill="#b9bfe6" opacity=".8"/></svg>
<span class="t" style="left:161.80px;top:23.40px;font-size:15px;color:#22397a;letter-spacing:0.112px;">Popular Wordpress Templates</span>
<a class="t u" style="left:145.10px;top:42.00px;font-size:15px;color:#7fbdf0;letter-spacing:-0.401px;">pilotbaba.us</a>
<div class="tag" style="left:145px;top:63px;width:84.8px"></div>
<span class="t" style="left:150.10px;top:65.74px;font-size:10px;color:#fff;font-weight:700;letter-spacing:-0.445px;">AUTODISCOVER</span>
<div class="tag" style="left:233px;top:63px;width:59.9px"></div>
<span class="t" style="left:238.10px;top:65.74px;font-size:10px;color:#fff;font-weight:700;letter-spacing:-0.166px;">MAJESTIC</span>
<div class="tag" style="left:295px;top:63px;width:41.5px"></div>
<span class="t" style="left:299.75px;top:65.74px;font-size:10px;color:#fff;font-weight:700;letter-spacing:-0.133px;">IMAGE</span>
<span class="t" style="left:537.35px;top:43.90px;font-size:15px;color:#8fa5c6;letter-spacing:0.090px;">…8/most-popular-wordpress-themes-enfold.jpg/</span>
<div style="position:absolute;left:862.75px;top:43.80px;width:25.00px;height:17.50px;background:#8cc767;border-radius:2px"></div>
<span class="t" style="left:867.05px;top:47.63px;font-size:10px;color:#fff;font-weight:700;letter-spacing:-0.044px;">200</span>
<div style="position:absolute;left:913.00px;top:23.00px;width:18.00px;height:21.90px;background:#63b32e;border-radius:2px"></div>
<span class="t" style="left:919.30px;top:28.43px;font-size:10px;color:#fff;font-weight:700;">F</span>
<div style="position:absolute;left:913.00px;top:48.60px;width:20.50px;height:20.50px;border:1px solid #ffa412;border-radius:50%;background:#fff"></div>
<span class="t" style="left:918.40px;top:51.63px;font-size:14.5px;color:#ffa412;font-weight:700;">G</span>
<svg class="abs" style="left:980.90px;top:22.80px" width="45" height="45" viewBox="0 0 45 45"><circle cx="22.500" cy="22.500" r="21" fill="none" stroke="#e6e7f3" stroke-width="3"/></svg>
<span class="t" style="left:1000.50px;top:39.59px;font-size:11px;color:#2d4a8a;">0</span>
<svg class="abs" style="left:1076.80px;top:22.80px" width="45" height="45" viewBox="0 0 45 45"><circle cx="22.500" cy="22.500" r="21" fill="none" stroke="#e6e7f3" stroke-width="3"/><path d="M22.500 1.500A21 21 0 0 1 23.82 1.54" fill="none" stroke="#dc4c5e" stroke-width="3"/></svg>
<span class="t" style="left:1096.40px;top:39.59px;font-size:11px;color:#2d4a8a;">1</span>
<span class="t" style="left:1159.80px;top:25.30px;font-size:15px;color:#a9b8d4;letter-spacing:0.142px;">N/A</span><div class="bar" style="left:1159.5px;top:45.8px"><b style="width:0px;background:#a9b8d4"></b></div>
<span class="t" style="left:1245.80px;top:25.30px;font-size:15px;color:#22397a;">0</span><div class="bar" style="left:1245.5px;top:45.8px"><b style="width:0px;background:#2f7de1"></b></div>
<span class="t" style="left:1332.30px;top:25.30px;font-size:15px;color:#22397a;">2</span><div class="bar" style="left:1332px;top:45.8px"><b style="width:1.2px;background:#2f7de1"></b></div>
<span class="t" style="left:1418.30px;top:25.30px;font-size:15px;color:#22397a;">8</span><div class="bar" style="left:1418px;top:45.8px"><b style="width:5px;background:#2f7de1"></b></div>
<span class="t" style="left:1504.00px;top:22.79px;font-size:11px;color:#3f5b93;letter-spacing:-0.472px;">.US</span>
<span class="t" style="left:1527.00px;top:22.79px;font-size:11px;color:#3f5b93;letter-spacing:-0.406px;">IP</span>
<svg class="abs" style="left:1504.00px;top:39.00px" width="16" height="16" viewBox="0 0 16 16"><rect x="0" y="0" width="16" height="1.15" fill="#c8323c"/><rect x="0" y="1.1" width="16" height="1.45" fill="#f6d6d8"/><rect x="0" y="2.5" width="16" height="1.15" fill="#d5555e"/><rect x="0" y="3.6" width="16" height="1.35" fill="#fbe9ea"/><rect x="0" y="4.9" width="16" height="1.15" fill="#d5555e"/><rect x="0" y="6" width="16" height="1.35" fill="#fbe9ea"/><rect x="0" y="7.3" width="16" height="1.35" fill="#e58a90"/><rect x="0" y="8.6" width="16" height="1.25" fill="#fff"/><rect x="0" y="9.8" width="16" height="1.15" fill="#cf4650"/><rect x="0" y="10.9" width="16" height="1.35" fill="#fff"/><rect x="0" y="12.2" width="16" height="2.75" fill="#f4c6c9"/><rect x="0" y="14.9" width="16" height="1.15" fill="#c8323c"/><rect x="0" y="0" width="12" height="8.600" fill="#474c75"/><rect x="0" y="0" width="1" height="8.600" fill="#1f3372"/><rect x="1" y=".3" width="10.700" height="8" fill="none" stroke="#2f3766" stroke-width=".6" stroke-dasharray=".9 .9"/></svg>
<svg class="abs" style="left:1527.00px;top:39.00px" width="16" height="16" viewBox="0 0 16 16"><rect width="5.400" height="16" fill="#1c2f86"/><rect x="5.400" width="5.200" height="16" fill="#fff"/><rect x="10.600" width="5.400" height="16" fill="#ea1f3d"/></svg>
<div style="position:absolute;left:1537.10px;top:14.80px;width:20.00px;height:20.00px;background:#e8305a;border-radius:50%"></div>
<span class="t" style="left:1544.35px;top:19.97px;font-size:9.6px;color:#fff;font-weight:700;">5</span>
<span class="t" style="left:1619.20px;top:21.50px;font-size:15px;color:#ffa412;letter-spacing:0.134px;">100</span>
<svg class="abs" style="left:1619.50px;top:41.00px" width="22" height="11" viewBox="0 0 22 11"><path d="M13.800 3V.6H.6V10.400H13.800V8" stroke="#a4b5d5" stroke-width="1.2" fill="none"/><path d="M7.300 5.500H21.200M17.800 2L21.300 5.500L17.800 9" stroke="#a4b5d5" stroke-width="1.2" fill="none"/></svg>
</div>
<div class="row" style="top:524px"><div class="plus" style="top:3.9px"></div></div>
</div>
</main></body></html>
